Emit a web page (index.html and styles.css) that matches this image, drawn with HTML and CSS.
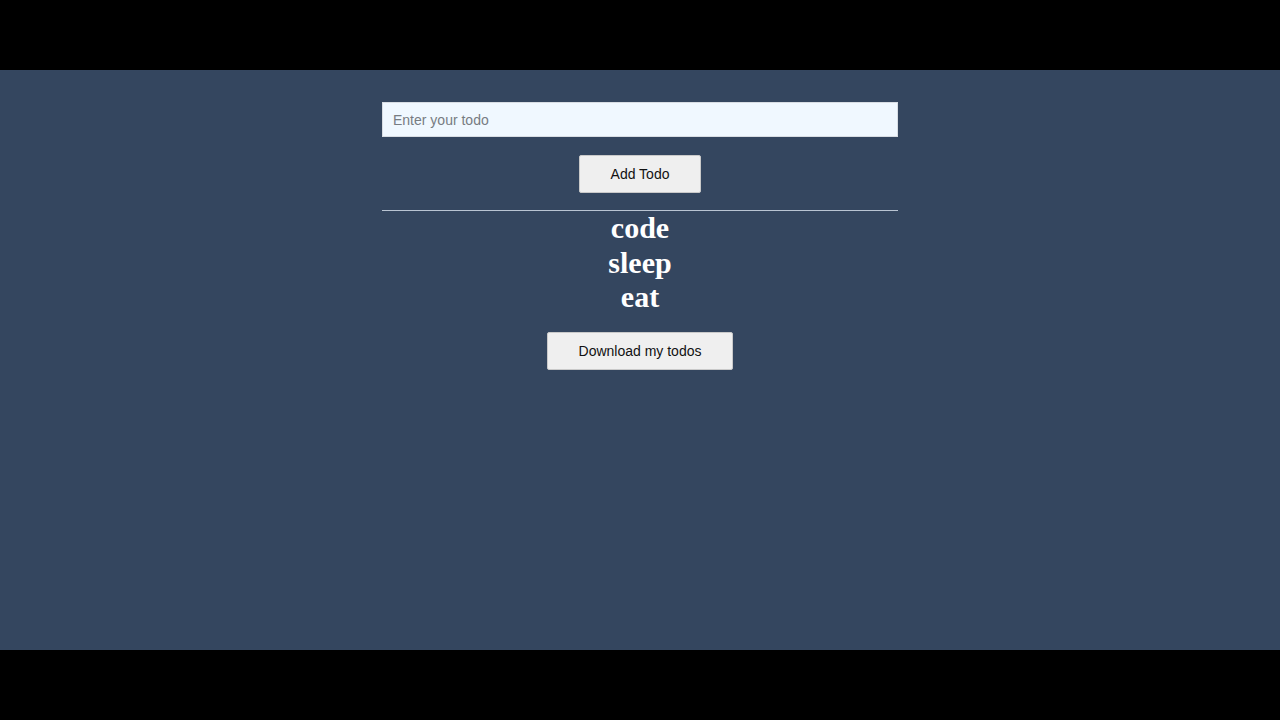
FILE: index.html
```html
<!DOCTYPE html>
<html lang="en">
<head>
<meta charset="utf-8">
<title>Todos</title>
<link rel="stylesheet" href="styles.css">
</head>
<body>
<div class="frame">
  <div class="band"></div>
  <main class="stage">
    <div class="app">
      <input class="todo-input" type="text" placeholder="Enter your todo">
      <button class="btn btn-add" type="button">Add Todo</button>
      <hr class="divider">
      <ul class="todo-list">
        <li class="todo-item">code</li>
        <li class="todo-item">sleep</li>
        <li class="todo-item">eat</li>
      </ul>
      <button class="btn btn-download" type="button">Download my todos</button>
    </div>
  </main>
  <div class="band"></div>
</div>
</body>
</html>
```
FILE: styles.css
```css
html, body {
  margin: 0;
  padding: 0;
  background: #000;
}

.frame {
  width: 1280px;
  height: 720px;
  display: flex;
  flex-direction: column;
}

.band {
  height: 70px;
  background: #000;
  flex: none;
}

.stage {
  height: 580px;
  background: #34465f;
  padding-top: 32px;
  box-sizing: border-box;
}

.app {
  width: 516px;
  margin: 0 auto;
  display: flex;
  flex-direction: column;
  align-items: center;
}

.todo-input {
  width: 516px;
  height: 35px;
  box-sizing: border-box;
  border: 1px solid #d8dde3;
  background: #f0f8ff;
  padding: 0 10px;
  font-family: "Liberation Sans", Arial, sans-serif;
  font-size: 14px;
  color: #222;
  outline: none;
}

.todo-input::placeholder {
  color: #777c82;
}

.btn {
  height: 38px;
  box-sizing: border-box;
  background: #efefef;
  border: 1px solid #c9c9c9;
  border-radius: 2px;
  font-family: "Liberation Sans", Arial, sans-serif;
  font-size: 14px;
  color: #111;
  padding: 0;
  cursor: pointer;
}

.btn-add {
  width: 122px;
  margin-top: 18px;
}

.divider {
  width: 516px;
  margin: 17px 0 0;
  border: 0;
  border-top: 1px solid #b9c4d2;
  height: 0;
}

.todo-list {
  list-style: none;
  margin: 0;
  padding: 0;
  text-align: center;
}

.todo-item {
  font-family: "Liberation Serif", "Times New Roman", serif;
  font-weight: bold;
  font-size: 30px;
  line-height: 34.5px;
  color: #fff;
}

.btn-download {
  width: 186px;
  margin-top: 17px;
}
```
